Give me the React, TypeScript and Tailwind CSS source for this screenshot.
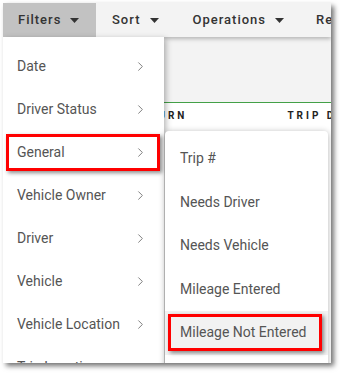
import { ChevronRight } from "lucide-react";

const mainItems = [
  "Date",
  "Driver Status",
  "General",
  "Vehicle Owner",
  "Driver",
  "Vehicle",
  "Vehicle Location",
  "Trip Location",
];

const subItems = ["Trip #", "Needs Driver", "Needs Vehicle", "Mileage Entered", "Mileage Not Entered"];

const Caret = () => (
  <svg width="9" height="5" viewBox="0 0 9 5" className="ml-[9px] shrink-0">
    <path d="M0 0h9L4.5 5z" fill="#333" />
  </svg>
);

const App = () => {
  return (
    <div className="w-[340px] h-[373px] bg-white overflow-hidden" style={{ fontFamily: "Roboto, 'Liberation Sans', sans-serif" }}>
      <div className="ml-[3px] mt-[3px] w-[328px] h-[360px] relative overflow-hidden bg-white shadow-[3px_3px_5px_rgba(0,0,0,0.55)]">
        {/* top nav */}
        <div className="h-[34px] flex items-center bg-[#f3f3f3] relative z-10 shadow-[0_2px_4px_rgba(0,0,0,0.25)] text-[13px] font-medium tracking-[1px] text-[#333] whitespace-nowrap">
          <div className="w-[93px] shrink-0 h-full bg-[#c2c2c2] flex items-center pl-[15px]">
            Filters
            <Caret />
          </div>
          <div className="shrink-0 flex items-center ml-[16px]">
            Sort
            <Caret />
          </div>
          <div className="shrink-0 flex items-center ml-[34px]">
            Operations
            <Caret />
          </div>
          <div className="shrink-0 ml-[32px]">Report</div>
        </div>

        {/* page behind */}
        <div className="h-[66px] bg-[#f3f3f3] border-b border-[#43a047]" />
        <div className="flex items-center h-[24px] text-[10px] font-bold tracking-[3px] text-[#222] whitespace-nowrap">
          <span className="shrink-0 ml-[128px]">RETURN</span>
          <span className="shrink-0 ml-[100px]">TRIP DATE</span>
        </div>

        {/* filters dropdown */}
        <div className="absolute left-0 top-[34px] w-[161px] h-[340px] bg-white z-20 shadow-[2px_2px_6px_rgba(0,0,0,0.3)] pt-[8px] text-[14px] text-[#555]">
          {mainItems.map((item) => (
            <div key={item} className="relative h-[43px] flex items-center justify-between pl-[14px] pr-[16px]">
              <span>{item}</span>
              <ChevronRight size={15} strokeWidth={1.5} className="text-[#777]" />
              {item === "General" && (
                <div className="absolute left-[3px] right-[4px] top-[3px] bottom-[3px] border-[3px] border-[#f00] shadow-[2px_2px_4px_rgba(0,0,0,0.45)]" />
              )}
            </div>
          ))}
        </div>

        {/* general submenu */}
        <div className="absolute left-[162px] top-[128px] w-[163px] h-[260px] bg-white z-30 rounded-t-[4px] shadow-[0_1px_6px_rgba(0,0,0,0.3)] pt-[6px] text-[14px] text-[#555]">
          {subItems.map((item, i) => (
            <div
              key={item}
              className={`relative h-[43.5px] flex items-center pl-[15px] ${i === subItems.length - 1 ? "bg-[#f2f2f2]" : ""}`}
            >
              <span>{item}</span>
              {i === subItems.length - 1 && (
                <div className="absolute left-[3px] right-[6px] top-[3px] bottom-[4px] border-[3px] border-[#f00] shadow-[2px_2px_4px_rgba(0,0,0,0.45)]" />
              )}
            </div>
          ))}
        </div>
      </div>
    </div>
  );
};

export default App;
